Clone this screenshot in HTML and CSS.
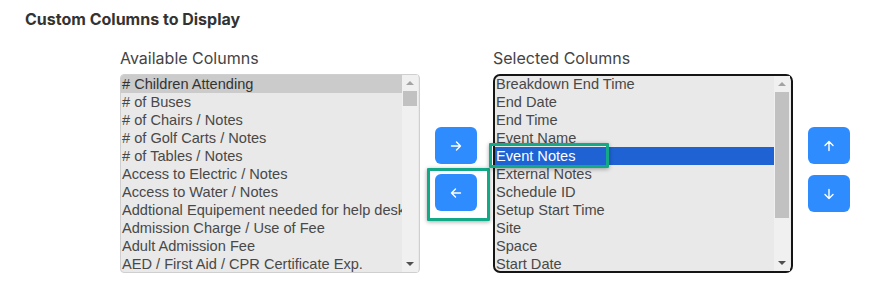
FILE: index.html
```html
<!DOCTYPE html>
<html>
<head>
<meta charset="utf-8">
<link rel="stylesheet" href="styles.css">
</head>
<body>
<div class="page">
  <h2 class="title">Custom Columns to Display</h2>
  <div class="picker">
    <div class="col">
      <div class="label">Available Columns</div>
      <div class="listbox light">
        <ul class="options">
          <li class="sel-grey"># Children Attending</li>
          <li># of Buses</li>
          <li># of Chairs / Notes</li>
          <li># of Golf Carts / Notes</li>
          <li># of Tables / Notes</li>
          <li>Access to Electric / Notes</li>
          <li>Access to Water / Notes</li>
          <li>Addtional Equipement needed for help desk</li>
          <li>Admission Charge / Use of Fee</li>
          <li>Adult Admission Fee</li>
          <li>AED / First Aid / CPR Certificate Exp.</li>
        </ul>
        <div class="scrollbar">
          <span class="arrow up"></span>
          <div class="track"><div class="thumb small"></div></div>
          <span class="arrow down"></span>
        </div>
      </div>
    </div>
    <div class="mid">
      <button class="btn"><svg width="12" height="12" viewBox="0 0 12 12"><path d="M1.5 6h9M6.5 2l4 4-4 4" fill="none" stroke="#fff" stroke-width="1.4" stroke-linecap="round" stroke-linejoin="round"/></svg></button>
      <button class="btn"><svg width="12" height="12" viewBox="0 0 12 12"><path d="M10.5 6h-9M5.5 2l-4 4 4 4" fill="none" stroke="#fff" stroke-width="1.4" stroke-linecap="round" stroke-linejoin="round"/></svg></button>
      <div class="hl hl-btn"></div>
    </div>
    <div class="col">
      <div class="label">Selected Columns</div>
      <div class="listbox dark">
        <ul class="options">
          <li>Breakdown End Time</li>
          <li>End Date</li>
          <li>End Time</li>
          <li>Event Name</li>
          <li class="sel-blue">Event Notes</li>
          <li>External Notes</li>
          <li>Schedule ID</li>
          <li>Setup Start Time</li>
          <li>Site</li>
          <li>Space</li>
          <li>Start Date</li>
        </ul>
        <div class="scrollbar">
          <span class="arrow up"></span>
          <div class="track"><div class="thumb big"></div></div>
          <span class="arrow down"></span>
        </div>
        <div class="hl hl-row"></div>
      </div>
    </div>
    <div class="order">
      <button class="btn"><svg width="12" height="12" viewBox="0 0 12 12"><path d="M6 10.5v-9M2 5.5l4-4 4 4" fill="none" stroke="#fff" stroke-width="1.4" stroke-linecap="round" stroke-linejoin="round"/></svg></button>
      <button class="btn"><svg width="12" height="12" viewBox="0 0 12 12"><path d="M6 1.5v9M2 6.5l4 4 4-4" fill="none" stroke="#fff" stroke-width="1.4" stroke-linecap="round" stroke-linejoin="round"/></svg></button>
    </div>
  </div>
</div>
</body>
</html>
```
FILE: styles.css
```css
* { box-sizing: border-box; }
html, body { margin: 0; padding: 0; background: #fff; }
body { width: 874px; height: 288px; overflow: hidden; font-family: Inter, "Liberation Sans", sans-serif; }
.page { padding: 10px 0 0 25px; }
.title {
  margin: 0;
  font-size: 16px;
  line-height: 18px;
  font-weight: 700;
  color: #333;
}
.picker {
  display: flex;
  margin-left: 95px;
  margin-top: 20px;
}
.col { width: 300px; display: flex; flex-direction: column; }
.label {
  font-size: 16px;
  line-height: 20px;
  color: #444;
  height: 26px;
}
.listbox {
  position: relative;
  height: 199px;
  background: #e9e9e9;
  display: flex;
  overflow: visible;
}
.listbox.light { border: 1px solid #cfcfcf; border-radius: 4px; }
.listbox.dark { border: 2px solid #151515; border-radius: 7px; }
.options {
  list-style: none;
  margin: 0;
  padding: 0;
  flex: 1;
  overflow: hidden;
  font-family: "Liberation Sans", Arial, sans-serif;
  font-size: 14.6px;
  color: #484848;
}
.dark .options { margin-top: -1px; }
.options li {
  height: 18px;
  line-height: 18px;
  padding-left: 1px;
  white-space: nowrap;
  overflow: hidden;
}
.options li.sel-grey { background: #cbcbcb; border-radius: 3px 0 0 0; color: #333; }
.options li.sel-blue { background: #1e62d4; color: #fff; }
.scrollbar {
  width: 16px;
  background: #f0f0f0;
  display: flex;
  flex-direction: column;
  align-items: center;
  margin-right: 1px;
}
.arrow {
  width: 0; height: 0;
  border-left: 4px solid transparent;
  border-right: 4px solid transparent;
  margin: 6px 0;
}
.arrow.up { border-bottom: 4px solid #a3a3a3; }
.arrow.down { border-top: 4px solid #505050; }
.track { flex: 1; width: 100%; padding: 0 1px; }
.thumb { background: #c1c1c1; width: 100%; }
.thumb.small { height: 15px; }
.thumb.big { height: 126px; }
.mid {
  position: relative;
  width: 73px;
  display: flex;
  flex-direction: column;
  padding: 79px 0 0 15px;
  gap: 10px;
}
.order {
  display: flex;
  flex-direction: column;
  padding: 79px 0 0 15px;
  gap: 11px;
}
.btn {
  width: 42px;
  height: 37px;
  border: none;
  border-radius: 6px;
  background: #2f8cff;
  display: flex;
  align-items: center;
  justify-content: center;
  padding: 0;
}
.hl {
  position: absolute;
  border: 3px solid #14a986;
  box-shadow: 0 1px 4px rgba(0,0,0,0.35);
  border-radius: 1px;
}
.hl-btn { left: 7px; top: 120px; width: 63px; height: 53px; }
.hl-row { left: -6px; top: 67px; width: 120px; height: 25px; }
```
